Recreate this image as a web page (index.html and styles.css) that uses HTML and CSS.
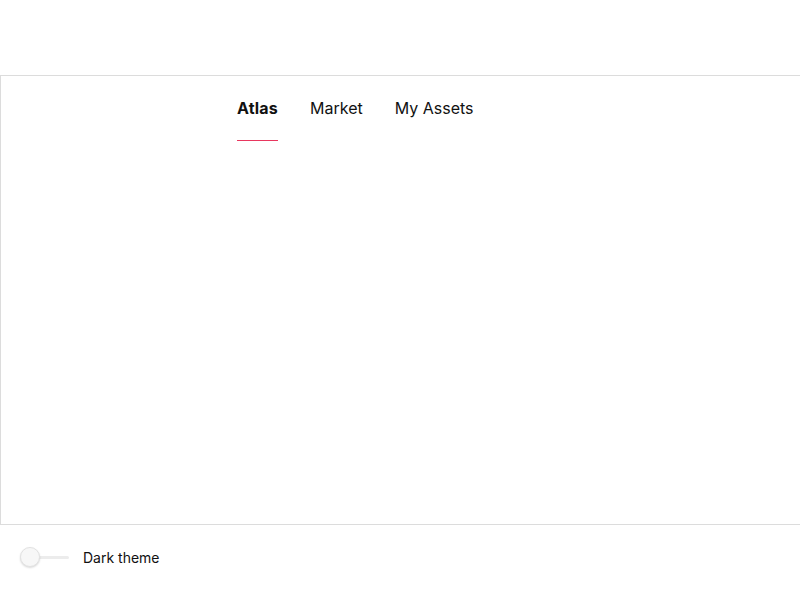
FILE: index.html
```html
<!DOCTYPE html>
<html>
<head>
<meta charset="utf-8">
<link rel="stylesheet" href="styles.css">
</head>
<body>
<div class="frame">
  <nav class="tabs">
    <a class="tab active">Atlas</a>
    <a class="tab">Market</a>
    <a class="tab">My Assets</a>
  </nav>
</div>
<div class="footer">
  <div class="toggle"><span class="track"></span><span class="thumb"></span></div>
  <span class="label">Dark theme</span>
</div>
</body>
</html>
```
FILE: styles.css
```css
html, body { margin: 0; padding: 0; background: #fff; }
body { font-family: Inter, "Noto Sans", "Liberation Sans", sans-serif; color: #111; }
.frame {
  margin-top: 75px;
  height: 448px;
  width: 820px;
  border: 1px solid #dcdcdc;
  box-sizing: content-box;
}
.tabs {
  display: flex;
  gap: 32px;
  padding-left: 236px;
  padding-top: 22px;
}
.tab {
  font-size: 16px;
  line-height: 20px;
  padding-bottom: 22px;
  color: #111;
  border-bottom: 1px solid transparent;
}
.tab.active { font-weight: 700; letter-spacing: 0.2px; border-bottom-color: #e8375f; }
.footer {
  display: flex;
  align-items: center;
  height: 64px;
  padding-left: 20px;
}
.toggle { position: relative; width: 50px; height: 22px; }
.track {
  position: absolute; left: 18px; top: 10px; width: 31px; height: 3px;
  background: #ececec; border-radius: 2px;
}
.thumb {
  position: absolute; left: 0; top: 1px; width: 20px; height: 20px; border-radius: 50%;
  background: #f7f7f7; border: 1px solid #e2e2e2; box-sizing: border-box;
  box-shadow: 0 1px 2px rgba(0,0,0,0.15);
}
.label { margin-left: 13px; font-size: 14px; color: #111; }
```
